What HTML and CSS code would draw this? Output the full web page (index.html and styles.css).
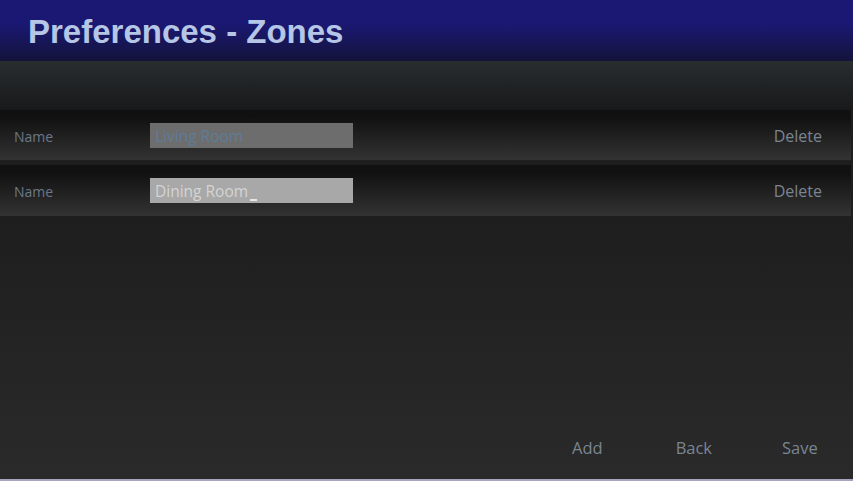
FILE: index.html
```html
<!DOCTYPE html>
<html>
<head>
<meta charset="utf-8">
<link rel="stylesheet" href="styles.css">
</head>
<body>
<div class="app">
  <header class="header"><h1 class="title">Preferences - Zones</h1></header>
  <div class="toolbar"></div>
  <div class="list">
    <div class="row">
      <span class="label">Name</span>
      <div class="input input-dim">Living Room</div>
      <span class="delete">Delete</span>
    </div>
    <div class="row">
      <span class="label">Name</span>
      <div class="input input-active">Dining Room<span class="caret"></span></div>
      <span class="delete">Delete</span>
    </div>
  </div>
  <div class="spacer"></div>
  <div class="footer">
    <span class="btn btn-add">Add</span>
    <span class="btn btn-back">Back</span>
    <span class="btn btn-save">Save</span>
  </div>
  <div class="bottom-line"></div>
</div>
</body>
</html>
```
FILE: styles.css
```css
* { box-sizing: border-box; }
html, body { margin: 0; padding: 0; }
body { width: 853px; height: 481px; overflow: hidden; background: #1e1e1e; }
.app {
  width: 853px; height: 481px;
  display: flex; flex-direction: column;
  background: linear-gradient(#1e1e1e 0, #1e1e1e 216px, #2a2a2a 481px);
  font-family: "Open Sans", "Noto Sans", sans-serif;
}
.header {
  height: 61px; flex: none;
  background: linear-gradient(#1a1872 0, #1a1872 40%, #14133a 100%);
  display: flex; align-items: center;
  padding-left: 28px;
}
.title {
  margin: 0; padding-top: 2px;
  font-family: "Liberation Sans", Arial, sans-serif;
  font-weight: bold; font-size: 33px;
  color: #b6c6e6;
}
.toolbar {
  height: 49px; flex: none;
  background: linear-gradient(#282d2f, #18191a);
}
.list { display: flex; flex-direction: column; gap: 5px; flex: none; }
.row {
  width: 851px; height: 50px;
  background: linear-gradient(#111111, #111111 15%, #333333);
  display: flex; align-items: flex-start;
}
.row + .row { height: 51px; }
.label {
  width: 150px; padding-left: 14px; margin-top: 17px;
  font-size: 14px; line-height: 20px; color: #6a7888;
}
.input {
  width: 203px; height: 25px; margin-top: 13px;
  padding-left: 5px;
  font-size: 15.5px; line-height: 27px;
  white-space: nowrap;
}
.input-dim { background: #6d6d6d; color: #5f7c96; }
.input-active { background: #a8a8a8; color: #d4d4d4; }
.caret {
  display: inline-block; width: 7px; height: 2px;
  background: #e8e8e8; vertical-align: -4px; margin-left: 2px;
}
.delete {
  margin-left: auto; margin-right: 29px; margin-top: 15px;
  font-size: 16px; line-height: 22px; color: #7a8592;
}
.spacer { flex: 1; }
.footer {
  height: 62px; flex: none;
  display: flex; align-items: center;
  padding-bottom: 2px;
}
.btn { font-size: 16.5px; color: #7a8592; }
.btn-add { margin-left: 572px; }
.btn-back { margin-left: 73px; }
.btn-save { margin-left: 70px; }
.bottom-line { height: 2px; flex: none; background: #aaa3bd; }
```
